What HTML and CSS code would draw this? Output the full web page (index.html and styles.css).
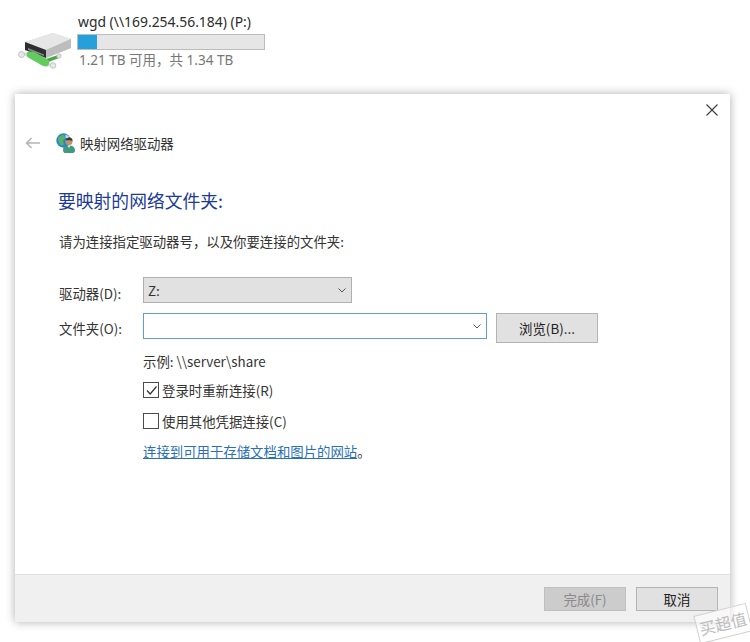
FILE: index.html
```html
<!DOCTYPE html>
<html lang="zh-CN">
<head>
<meta charset="utf-8">
<title>映射网络驱动器</title>
<link rel="stylesheet" href="styles.css">
</head>
<body>
<header class="drive">
  <svg class="drive-icon" width="58" height="42" viewBox="0 0 58 42">
    <path d="M7 12 L35 3 L53 9 L53 18 L28 28 L7 20 Z" fill="#cfcfcf"/>
    <path d="M7 12 L35 3 L53 9 L28 20 Z" fill="#e6e6e6"/>
    <path d="M28 20 L53 9 L53 18 L28 28 Z" fill="#bdbdbd"/>
    <path d="M7 12 L28 20 L28 28 L7 20 Z" fill="#2f2f2f"/>
    <path d="M10 18 L26 24.5 L26 26 L10 20 Z" fill="#8c8c8c"/>
    <path d="M25 30 L40 25 L41 28 L28 33 Z" fill="#4aa84a"/>
    <path d="M2 23 L11 22 L31 33 L34 36 L28 37 L9 27 Z" fill="#dedede"/>
    <path d="M10 22 C14 21 17 22 20 24 L29 29 C32 31 32 35 29 36 C26 37 23 35 20 33 L11 28 C8 26 8 23 10 22 Z" fill="#62cb5e"/>
    <circle cx="3.5" cy="24.5" r="3" fill="#e8e8e8" stroke="#b8b8b8" stroke-width="0.8"/>
    <circle cx="35" cy="35.5" r="2.8" fill="#e8e8e8" stroke="#b8b8b8" stroke-width="0.8"/>
    <circle cx="41" cy="26" r="2.2" fill="#e0e0e0" stroke="#bdbdbd" stroke-width="0.8"/>
  </svg>
  <div class="drive-info">
    <div class="drive-name">wgd (\\169.254.56.184) (P:)</div>
    <div class="meter"><div class="meter-fill"></div></div>
    <div class="drive-free">1.21 TB 可用，共 1.34 TB</div>
  </div>
</header>

<main class="dialog">
  <div class="close-row">
    <svg width="12" height="12" viewBox="0 0 12 12"><path d="M0.5 0.5 L11.5 11.5 M11.5 0.5 L0.5 11.5" stroke="#3a3a3a" stroke-width="1.1" fill="none"/></svg>
  </div>
  <div class="nav-row">
    <svg class="back" width="16" height="12" viewBox="0 0 16 12"><path d="M15 6 H1.5 M6.5 1 L1.5 6 L6.5 11" stroke="#b4b4b4" stroke-width="1.5" fill="none"/></svg>
    <svg class="net-icon" width="20" height="20" viewBox="0 0 20 20">
      <circle cx="7.5" cy="7.5" r="7.2" fill="#2b86c5"/>
      <path d="M2 4.5 L7 1.5 L9.5 4.5 L7 8 L8 11.5 L5 12.5 L2.5 8.5 Z" fill="#58b368"/>
      <path d="M9.5 1.5 L13 3.5 L12 6.5 L9.5 4.5 Z" fill="#bfe2f0"/>
      <path d="M7 17 C7 13.5 10 12.5 13 12.5 C16 12.5 19 13.5 19 17.5 C19 19 18 20 17 20 H9 C8 20 7 19 7 17 Z" fill="#3f9a80"/>
      <path d="M11.5 12.5 L13 15 L14.5 12.5 Z" fill="#e8e8e8"/>
      <circle cx="13" cy="8.5" r="3.6" fill="#c2926a"/>
      <path d="M9.6 7.5 C10 5 12 4.5 13.5 4.6 C15.5 4.8 16.6 6 16.5 8 C15 7 12 7 9.6 7.5 Z" fill="#3c3a38"/>
    </svg>
    <span class="nav-title">映射网络驱动器</span>
  </div>
  <div class="content">
    <h1 class="heading">要映射的网络文件夹:</h1>
    <p class="intro">请为连接指定驱动器号，以及你要连接的文件夹:</p>
    <div class="form">
      <label class="label label-first">驱动器(D):</label>
      <div class="select">
        <span>Z:</span>
        <svg class="chev" width="8" height="5" viewBox="0 0 8 5"><path d="M0.5 0.5 L4 4 L7.5 0.5" stroke="#555" stroke-width="1" fill="none"/></svg>
      </div>
      <label class="label">文件夹(O):</label>
      <div class="folder-row">
        <div class="combo">
          <svg class="chev" width="8" height="5" viewBox="0 0 8 5"><path d="M0.5 0.5 L4 4 L7.5 0.5" stroke="#555" stroke-width="1" fill="none"/></svg>
        </div>
        <div class="btn browse">浏览(B)...</div>
      </div>
      <div class="options">
        <div class="example">示例: \\server\share</div>
        <div class="check check-first">
          <span class="box"><svg width="13" height="13" viewBox="0 0 13 13"><path d="M2 6.5 L5.2 10 L11.5 2.5" stroke="#333" stroke-width="1.2" fill="none"/></svg></span>
          <span>登录时重新连接(R)</span>
        </div>
        <div class="check check-second">
          <span class="box"></span>
          <span>使用其他凭据连接(C)</span>
        </div>
        <div class="link-row"><a class="link">连接到可用于存储文档和图片的网站</a>。</div>
      </div>
    </div>
  </div>
  <footer class="footer">
    <div class="btn disabled">完成(F)</div>
    <div class="btn">取消</div>
  </footer>
</main>
<div class="stamp">买超值</div>
</body>
</html>
```
FILE: styles.css
```css
* { box-sizing: border-box; }
html, body { margin: 0; padding: 0; }
body {
  width: 750px;
  height: 642px;
  background: #fff;
  position: relative;
  overflow: hidden;
  font-family: "Noto Sans CJK SC", "Liberation Sans", sans-serif;
  font-size: 13.4px;
  color: #333;
}
.drive {
  height: 94px;
  display: flex;
  padding: 13px 0 0 18px;
}
.drive-icon { margin-top: 17px; flex: none; }
.drive-info { margin-left: 1px; width: 190px; }
.drive-name {
  font-family: "Noto Sans", "Noto Sans CJK SC", sans-serif;
  font-size: 13.9px;
  line-height: 18px;
  color: #2c2c2c;
  padding-left: 1px;
  white-space: nowrap;
}
.meter {
  width: 188px;
  height: 16px;
  margin-top: 3px;
  background: #e6e6e6;
  border: 1px solid #bcbcbc;
}
.meter-fill { width: 19px; height: 14px; background: #26a0da; }
.drive-free {
  font-family: "Noto Sans", "Noto Sans CJK SC", sans-serif;
  font-size: 13.5px;
  line-height: 18px;
  margin-top: 1px;
  padding-left: 2px;
  color: #777;
  white-space: nowrap;
}
.dialog {
  width: 715px;
  height: 528px;
  margin-left: 15px;
  background: #fff;
  box-shadow: 0 0 9px rgba(0, 0, 0, 0.32);
  display: flex;
  flex-direction: column;
}
.close-row {
  height: 33px;
  padding: 10px 12px 0 0;
  display: flex;
  justify-content: flex-end;
}
.nav-row {
  height: 32px;
  display: flex;
  align-items: center;
  padding-left: 10px;
}
.back { flex: none; }
.net-icon { margin-left: 15px; flex: none; }
.nav-title { margin-left: 4px; color: #333; }
.content { flex: 1; padding: 0 0 0 44px; }
.heading {
  margin: 28px 0 0 -1px;
  font-size: 17.8px;
  line-height: 26px;
  font-weight: 400;
  color: #1c3a94;
}
.intro { margin: 18px 0 0; line-height: 20px; color: #333; }
.form {
  margin-top: 26px;
  display: grid;
  grid-template-columns: 84px auto;
  row-gap: 10px;
  align-items: center;
}
.label { line-height: 20px; color: #333; }
.label-first { padding-top: 6px; }
.select {
  width: 209px;
  height: 26px;
  background: #e1e1e1;
  border: 1px solid #b0b0b0;
  padding: 0 5px 0 4px;
  display: flex;
  align-items: center;
  justify-content: space-between;
}
.folder-row { display: flex; align-items: flex-start; }
.combo {
  width: 344px;
  height: 26px;
  background: #fff;
  border: 1px solid #5f9fd6;
  display: flex;
  align-items: center;
  justify-content: flex-end;
  padding-right: 5px;
}
.btn {
  width: 82px;
  height: 24px;
  background: #e1e1e1;
  border: 1px solid #b4b4b4;
  display: flex;
  align-items: center;
  justify-content: center;
  color: #222;
}
.browse { width: 102px; height: 30px; margin-left: 9px; }
.options { grid-column: 2; margin-top: -2px; }
.example { line-height: 20px; }
.check { display: flex; align-items: center; gap: 3px; line-height: 20px; }
.check-first { margin-top: 9px; }
.check-second { margin-top: 11px; }
.box {
  width: 16px;
  height: 16px;
  border: 1px solid #4a4a4a;
  background: #fff;
  display: flex;
  align-items: center;
  justify-content: center;
  flex: none;
}
.link-row { margin-top: 10px; line-height: 20px; }
.link { color: #2a70b8; text-decoration: underline; }
.footer {
  height: 48px;
  background: #f0f0f0;
  border-top: 1px solid #dfdfdf;
  display: flex;
  justify-content: flex-end;
  align-items: center;
  gap: 10px;
  padding: 0 12px 0 0;
}
.disabled { background: #cccccc; border-color: #bfbfbf; color: #8a8a8a; }
.stamp {
  position: absolute;
  left: 696px;
  top: 609px;
  width: 54px;
  height: 29px;
  transform: rotate(-14deg);
  border: 1px solid #cfcfcf;
  background: rgba(255, 255, 255, 0.5);
  font-size: 16px;
  line-height: 27px;
  text-align: center;
  color: #bdbdbd;
  white-space: nowrap;
}
```
